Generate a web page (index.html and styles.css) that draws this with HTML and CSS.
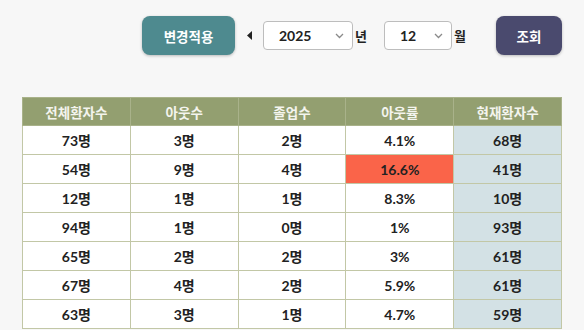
FILE: index.html
```html
<!DOCTYPE html>
<html lang="ko">
<head>
<meta charset="utf-8">
<link rel="stylesheet" href="styles.css">
</head>
<body>
<div class="page">
  <div class="toolbar">
    <button class="btn btn-apply">변경적용</button>
    <svg class="prev" width="5" height="9" viewBox="0 0 5 9"><polygon points="5,0 5,9 0,4.5" fill="#222"/></svg>
    <div class="select sel-year"><span>2025</span><svg width="9" height="6" viewBox="0 0 9 6"><polyline points="1,1 4.5,4.5 8,1" fill="none" stroke="#8a8a8a" stroke-width="1.3"/></svg></div>
    <span class="unit">년</span>
    <div class="select sel-month"><span>12</span><svg width="9" height="6" viewBox="0 0 9 6"><polyline points="1,1 4.5,4.5 8,1" fill="none" stroke="#8a8a8a" stroke-width="1.3"/></svg></div>
    <span class="unit">월</span>
    <button class="btn btn-search">조회</button>
  </div>
  <table class="grid">
    <thead>
      <tr><th>전체환자수</th><th>아웃수</th><th>졸업수</th><th>아웃률</th><th>현재환자수</th></tr>
    </thead>
    <tbody>
      <tr><td>73명</td><td>3명</td><td>2명</td><td>4.1%</td><td class="cur">68명</td></tr>
      <tr><td>54명</td><td>9명</td><td>4명</td><td class="alert">16.6%</td><td class="cur">41명</td></tr>
      <tr><td>12명</td><td>1명</td><td>1명</td><td>8.3%</td><td class="cur">10명</td></tr>
      <tr><td>94명</td><td>1명</td><td>0명</td><td>1%</td><td class="cur">93명</td></tr>
      <tr><td>65명</td><td>2명</td><td>2명</td><td>3%</td><td class="cur">61명</td></tr>
      <tr><td>67명</td><td>4명</td><td>2명</td><td>5.9%</td><td class="cur">61명</td></tr>
      <tr><td>63명</td><td>3명</td><td>1명</td><td>4.7%</td><td class="cur">59명</td></tr>
    </tbody>
  </table>
</div>
</body>
</html>
```
FILE: styles.css
```css
* { box-sizing: border-box; }
html, body { margin: 0; padding: 0; }
body {
  background: #f7f7f7;
  font-family: Lato, "Noto Sans CJK KR", sans-serif;
  color: #222;
}
.page {
  width: 584px;
  padding: 16px 22px 0 22px;
}
.toolbar {
  display: flex;
  align-items: center;
  justify-content: flex-end;
  height: 39px;
}
.btn {
  border: none;
  color: #fff;
  font-family: "Noto Sans CJK KR", sans-serif;
  font-weight: 700;
  font-size: 13.5px;
  height: 39px;
  border-radius: 8px;
  box-shadow: 0 1px 3px rgba(0,0,0,0.25);
  padding: 0;
  flex: none;
}
.btn-apply {
  width: 93px;
  background: #4e8a8f;
  margin-right: 12px;
}
.btn-search {
  width: 66px;
  background: #4a4a6e;
  margin-left: 29px;
}
.prev { margin-right: 11px; flex: none; }
.select {
  flex: none;
  height: 29px;
  background: #fff;
  border: 1px solid #bdbdbd;
  border-radius: 4px;
  display: flex;
  align-items: center;
  justify-content: space-between;
  padding: 0 8px 0 15px;
  font-weight: 700;
  font-size: 14px;
}
.sel-year { width: 90px; }
.sel-month { width: 68px; margin-left: 16px; }
.unit {
  flex: none;
  width: 13px;
  font-family: "Noto Sans CJK KR", sans-serif;
  font-weight: 700;
  font-size: 13px;
  margin-left: 2px;
}
.grid {
  margin-top: 42px;
  width: 540px;
  border-collapse: collapse;
  table-layout: fixed;
  font-size: 14px;
  font-weight: 700;
}
.grid th {
  background: #939f70;
  color: #f4f4ee;
  height: 28px;
  font-weight: 700;
  font-size: 13.5px;
  border: 1px solid #a9b28a;
  font-family: "Noto Sans CJK KR", sans-serif;
}
.grid td {
  background: #fff;
  height: 29px;
  text-align: center;
  border: 1px solid #c2c7a6;
  padding: 0;
}
.grid td.cur { background: #d3e1e5; }
.grid td.alert { background: #fa6449; }
```
